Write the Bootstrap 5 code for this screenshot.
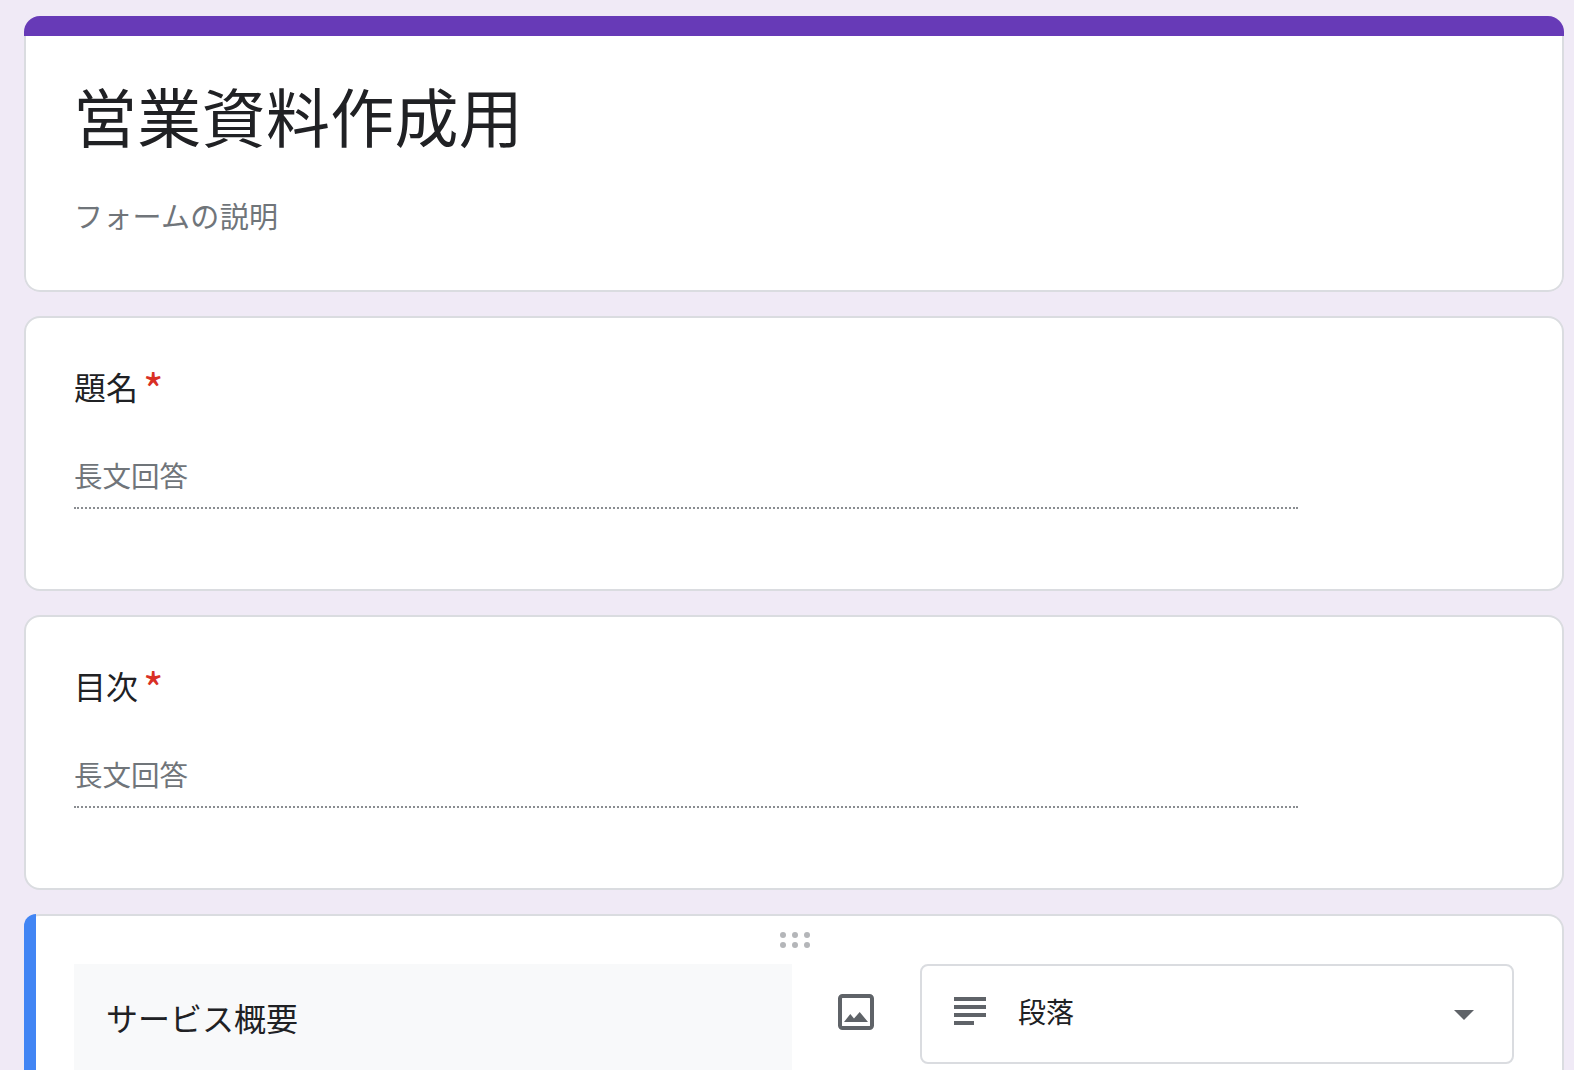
<!DOCTYPE html>
<html lang="ja">
<head>
<meta charset="utf-8">
<title>営業資料作成用</title>
<link href="https://cdn.jsdelivr.net/npm/bootstrap@5.3.0/dist/css/bootstrap.min.css" rel="stylesheet">
<style>
html,body{height:1070px;overflow:hidden}
body{background:#f0eaf6;padding:16px 10px 0 24px;font-family:"Noto Sans CJK JP","Liberation Sans",sans-serif;color:#202124}
.fcard{background:#fff;border:2px solid #dadce0;border-radius:16px;margin-bottom:24px}
.title-card{border-radius:16px;overflow:hidden;margin-bottom:24px}
.top-strip{height:20px;background:#673ab7}
.title-body{height:256px;background:#fff;border:2px solid #dadce0;border-top:0;border-radius:0 0 16px 16px}
.form-title{font-size:64px;line-height:80px;margin:0;padding:38px 0 0 47px;font-weight:400;letter-spacing:.3px}
.form-desc{font-size:29px;line-height:40px;color:#70757a;padding:41px 0 0 48px;letter-spacing:.3px}
.q-card{height:275px;padding:44px 0 0 48px}
.q-title{font-size:32px;line-height:48px;display:flex;align-items:flex-start;gap:5px}
.req{color:#d93025;font-size:44px;line-height:52px;font-weight:400}
.q-answer{font-size:28.500px;line-height:40px;color:#70757a;width:1224px;border-bottom:2px dotted #8a8d91;margin-top:41px;padding-bottom:12px}
.active-card{height:200px;position:relative;border-left:0;margin:0;padding:48px 48px 0 0}
.blue-strip{width:12px;background:#4285f4;position:absolute;left:0;top:-2px;bottom:0;border-top-left-radius:16px}
.drag-dots{position:absolute;left:756px;top:16px;width:32px;display:grid;grid-template-columns:repeat(3,6px);gap:4px 6px}
.drag-dots span{width:6px;height:6px;border-radius:50%;background:#b4b6b9}
.edit-row{padding-left:50px}
.q-field{width:718px;height:160px;background:#f8f9fa;font-size:32px;line-height:48px;padding:29px 0 0 32px}
.img-btn{width:128px;display:flex;justify-content:center;padding-top:30px}
.type-box{width:594px;height:100px;border:2px solid #dadce0;border-radius:8px;font-size:28px;padding:0 38px 6px 32px}
.lines-ic{margin-right:32px}
.caret{width:0;height:0;border-left:10px solid transparent;border-right:10px solid transparent;border-top:10px solid #5f6368;margin-top:8px}
</style>
</head>
<body>
<div class="title-card">
  <div class="top-strip"></div>
  <div class="title-body">
    <h1 class="form-title">営業資料作成用</h1>
    <div class="form-desc">フォームの説明</div>
  </div>
</div>
<div class="fcard q-card">
  <div class="q-title"><span>題名</span><span class="req">*</span></div>
  <div class="q-answer">長文回答</div>
</div>
<div class="fcard q-card">
  <div class="q-title"><span>目次</span><span class="req">*</span></div>
  <div class="q-answer">長文回答</div>
</div>
<div class="fcard active-card">
  <div class="blue-strip"></div>
  <div class="drag-dots"><span></span><span></span><span></span><span></span><span></span><span></span></div>
  <div class="edit-row d-flex align-items-start">
    <div class="q-field">サービス概要</div>
    <div class="img-btn">
      <svg width="36" height="36" viewBox="0 0 36 36"><rect x="2" y="2" width="32" height="32" rx="2.5" fill="none" stroke="#5f6368" stroke-width="4"/><path d="M6 28l6.300-8 3.700 4.500 5.700-6.500 8.300 10z" fill="#5f6368"/></svg>
    </div>
    <div class="type-box d-flex align-items-center">
      <svg class="lines-ic" width="32" height="28" viewBox="0 0 32 28" fill="#5f6368"><rect y="0" width="32" height="4"/><rect y="8" width="32" height="4"/><rect y="16" width="32" height="4"/><rect y="24" width="20" height="4"/></svg>
      <span>段落</span>
      <span class="caret ms-auto"></span>
    </div>
  </div>
</div>
</body>
</html>
